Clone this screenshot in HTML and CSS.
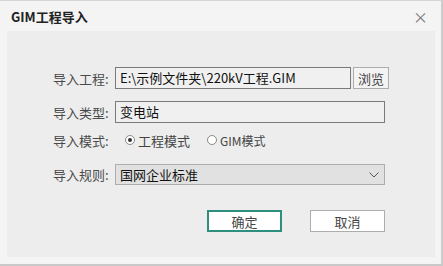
FILE: index.html
```html
<!DOCTYPE html>
<html lang="zh-CN">
<head>
    <meta charset="UTF-8">
    <title>GIM工程导入</title>
    <link rel="stylesheet" href="styles.css">
</head>
<body>
<div class="window">
    <div class="title-bar">
        <span class="title">GIM工程导入</span>
        <span class="close">&times;</span>
    </div>
    <div class="panel">
        <div class="row row-project">
            <label class="label">导入工程:</label>
            <div class="field-path">E:\示例文件夹\220kV工程.GIM</div>
            <button class="browse">浏览</button>
        </div>
        <div class="row row-type">
            <label class="label">导入类型:</label>
            <div class="field-wide">变电站</div>
        </div>
        <div class="row row-mode">
            <label class="label">导入模式:</label>
            <span class="radio checked"></span><span class="radio-text">工程模式</span>
            <span class="radio"></span><span class="radio-text small">GIM模式</span>
        </div>
        <div class="row row-rule">
            <label class="label">导入规则:</label>
            <div class="select">
                <span>国网企业标准</span>
                <svg width="10" height="6" viewBox="0 0 10 6"><path d="M0.5 0.5 L5 5 L9.5 0.5" fill="none" stroke="#555" stroke-width="1"/></svg>
            </div>
        </div>
        <div class="actions">
            <button class="btn btn-ok">确定</button>
            <button class="btn">取消</button>
        </div>
    </div>
</div>
</body>
</html>
```

FILE: styles.css
```css
body {
    margin: 0;
    background-color: #c9c9c9;
    font-family: "Noto Sans CJK SC", "Noto Sans", sans-serif;
    font-size: 13px;
    color: #333;
}

.window {
    width: 441px;
    height: 263px;
    background-color: #f4f4f4;
    border-top: 1px solid #d6d6d6;
    border-right: 1px solid #cfcfcf;
}

.title-bar {
    height: 30px;
    display: flex;
    align-items: center;
    justify-content: space-between;
    padding: 0 11px;
}

.title {
    font-weight: bold;
    font-size: 13px;
    color: #222;
}

.close {
    font-size: 15px;
    color: #777;
    margin-right: 2px;
}

.panel {
    margin: 0 6px 0 7px;
    height: 226px;
    box-sizing: border-box;
    background-color: #ededed;
    padding-top: 36px;
    padding-left: 46px;
}

.row {
    display: flex;
    align-items: center;
    height: 22px;
}

.label {
    width: 62px;
    color: #4a4a4a;
}

.row-type {
    margin-top: 12px;
}

.row-mode {
    margin-top: 6px;
}

.row-rule {
    margin-top: 13px;
    height: 21px;
}

.field-path, .field-wide {
    height: 22px;
    box-sizing: border-box;
    border: 1px solid #7a7a7a;
    background-color: #f0f0f0;
    padding-left: 4px;
    line-height: 20px;
    color: #111;
}

.field-path {
    width: 236px;
}

.field-wide {
    width: 270px;
}

.browse {
    width: 36px;
    height: 22px;
    margin-left: 2px;
    padding: 0;
    border: 1px solid #adadad;
    background-color: #f3f3f3;
    font-family: inherit;
    font-size: 13px;
    color: #444;
}

.radio {
    width: 10px;
    height: 10px;
    border: 1px solid #8a8a8a;
    border-radius: 50%;
    background-color: #fff;
    box-sizing: border-box;
    margin-left: 10px;
    position: relative;
}

.radio.checked::after {
    content: "";
    position: absolute;
    left: 2px;
    top: 2px;
    width: 4px;
    height: 4px;
    border-radius: 50%;
    background-color: #333;
}

.radio-text {
    margin-left: 3px;
    margin-right: 7px;
    color: #444;
}

.radio-text.small {
    font-size: 12px;
}

.select {
    width: 270px;
    height: 21px;
    box-sizing: border-box;
    border: 1px solid #adadad;
    background-color: #e1e1e1;
    display: flex;
    align-items: center;
    justify-content: space-between;
    padding: 0 5px 0 4px;
    color: #111;
}

.actions {
    display: flex;
    margin-top: 25px;
    margin-left: 154px;
    gap: 28px;
}

.btn {
    width: 75px;
    height: 22px;
    box-sizing: border-box;
    border: 1px solid #adadad;
    background-color: #fff;
    font-family: inherit;
    font-size: 13px;
    color: #444;
    padding: 0;
}

.btn-ok {
    border: 2px solid #2f8f7e;
}
```
